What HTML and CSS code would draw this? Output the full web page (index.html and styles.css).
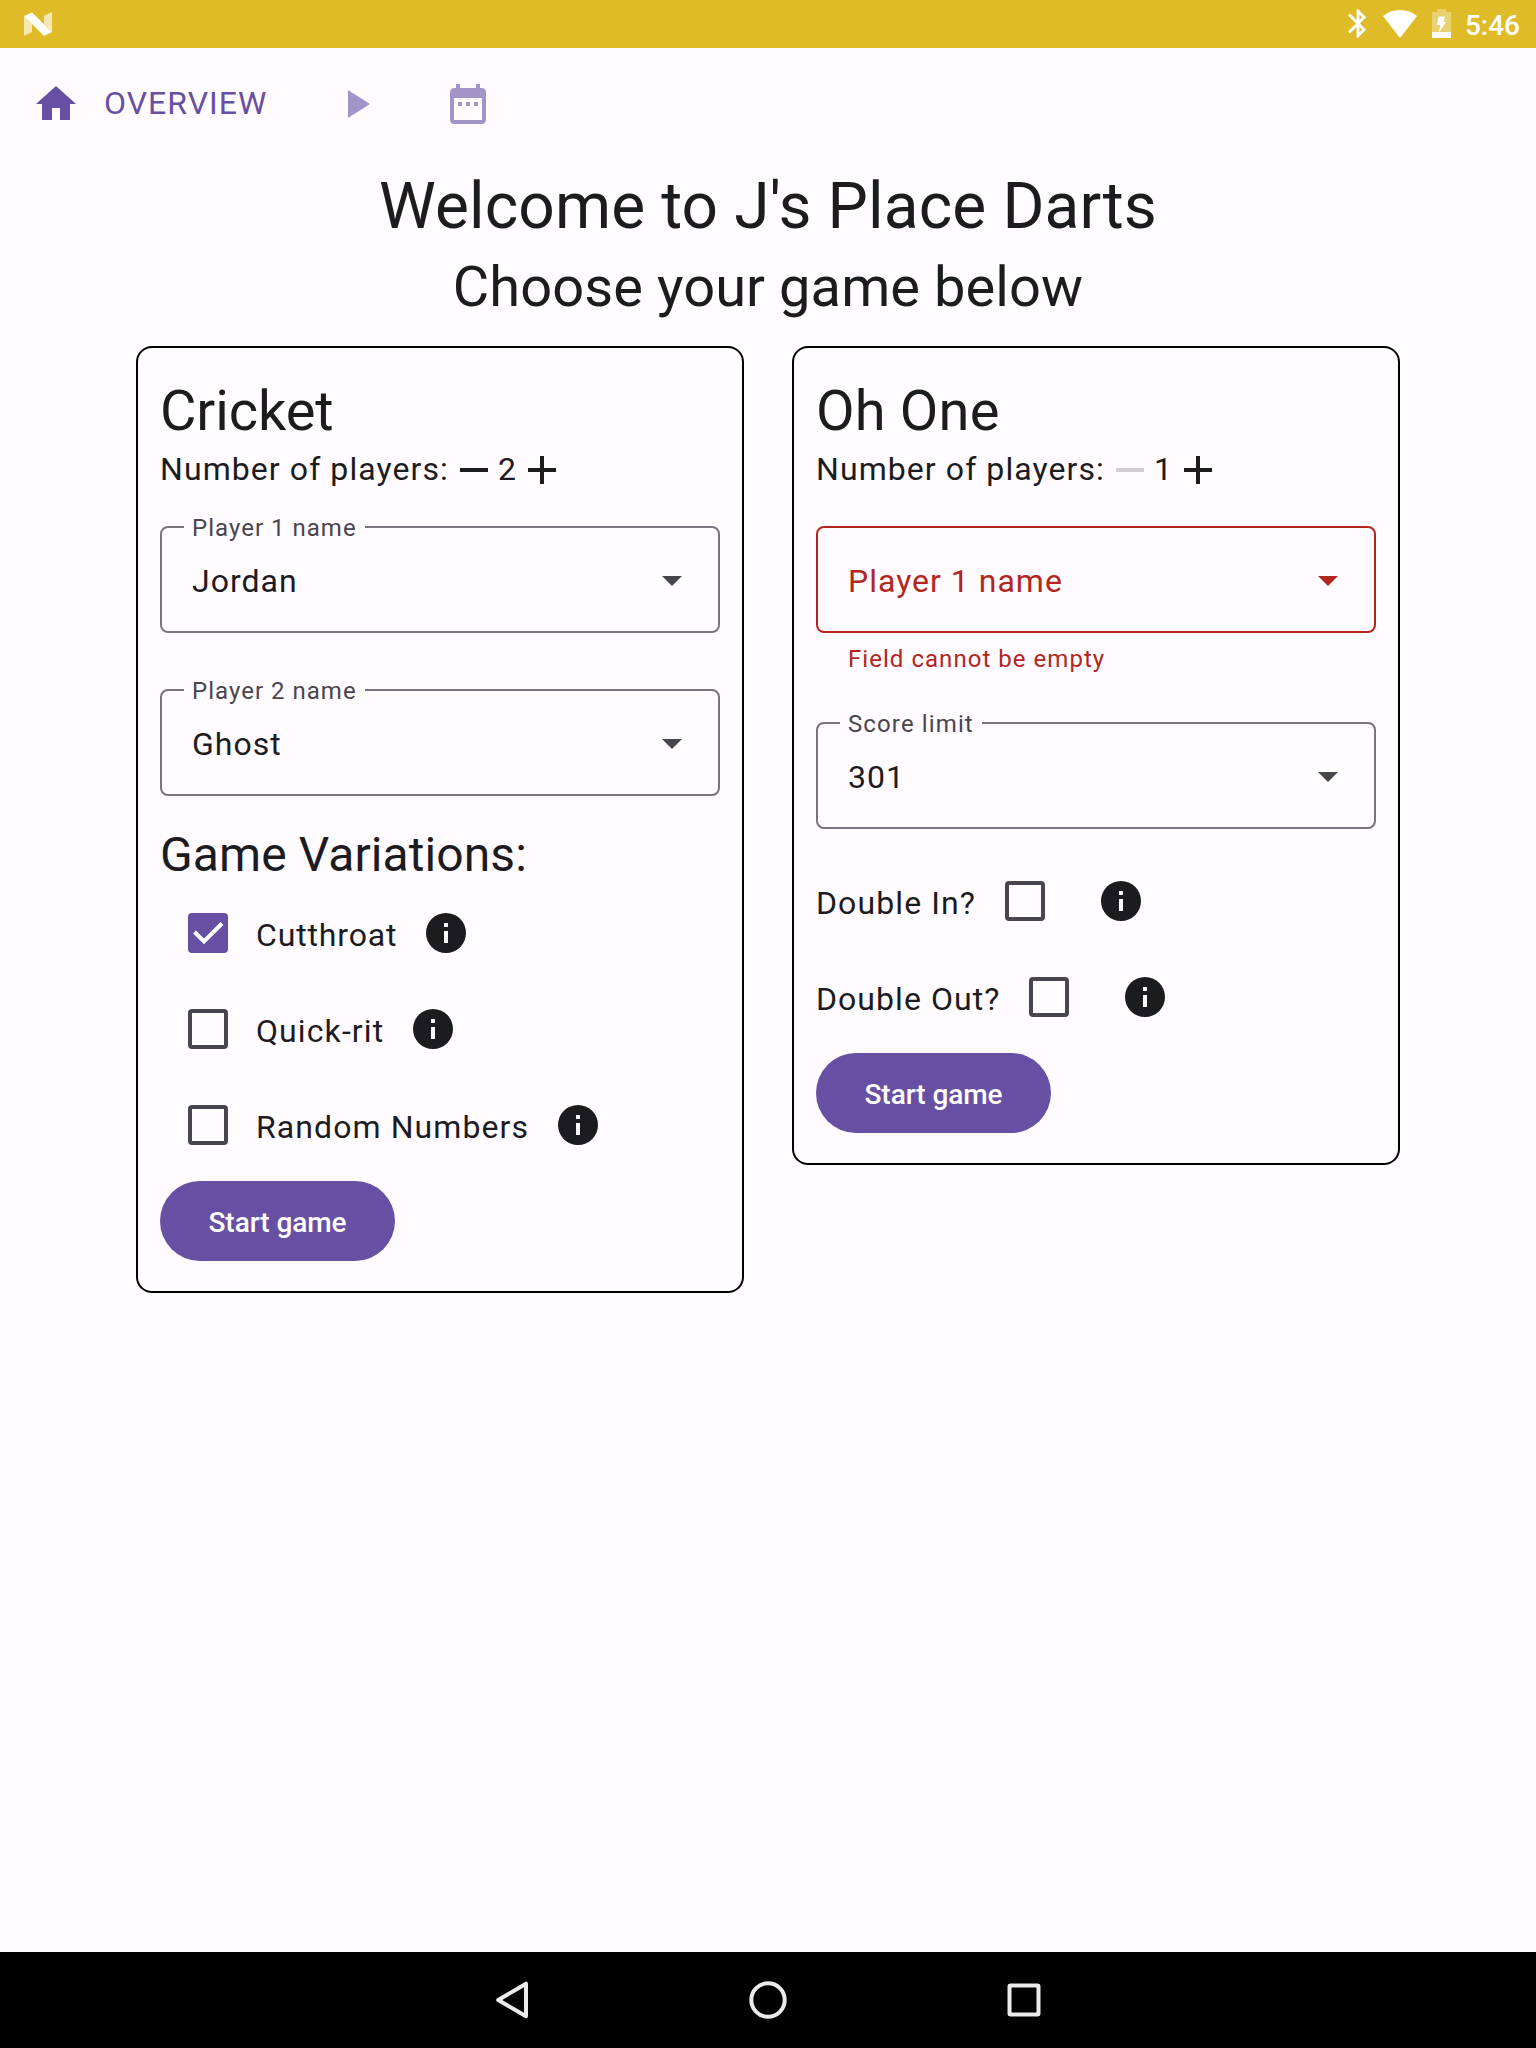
FILE: index.html
```html
<!DOCTYPE html>
<html lang="en">
<head>
<meta charset="utf-8">
<title>J's Place Darts</title>
<link rel="stylesheet" href="styles.css">
</head>
<body>
<svg width="0" height="0" class="defs" aria-hidden="true">
  <symbol id="info" viewBox="0 0 40 40"><path fill-rule="evenodd" d="M20 0a20 20 0 1 0 0 40a20 20 0 0 0 0-40zM18 10h4v4h-4zM18 18h4v12h-4z"/></symbol>
  <symbol id="arrow" viewBox="0 0 24 24"><path d="M7 10l5 5 5-5z"/></symbol>
  <symbol id="minus" viewBox="0 0 24 24"><path d="M19 13H5v-2h14z"/></symbol>
  <symbol id="plus" viewBox="0 0 24 24"><path d="M19 13h-6v6h-2v-6H5v-2h6V5h2v6h6z"/></symbol>
</svg>
<div class="screen">
  <header class="status">
    <svg class="n-logo" viewBox="0 0 28 24" width="28" height="24"><path fill="#fff" fill-opacity=".65" d="M0 4l8 8v8L0 24zM20 4l8-4v20l-8-8z"/><path fill="#fff" d="M0 4L8 0.500L28 20l-8 4z"/></svg>
    <div class="status-icons">
      <svg class="bt" viewBox="5 2 14 20" width="20" height="29"><path fill="#fff" d="M17.710 7.710L12 2h-1v7.590L6.410 5 5 6.410 10.590 12 5 17.590 6.410 19 11 14.410V22h1l5.710-5.710-4.300-4.290 4.300-4.290zM13 5.830l1.880 1.880L13 9.590V5.830zm1.880 10.460L13 18.170v-3.760l1.880 1.880z"/></svg>
      <svg class="wifi" viewBox="0 0 34 28" width="34" height="28"><path fill="#fff" d="M17 28L0 6Q7 0 17 0t17 6z"/></svg>
      <svg class="batt" viewBox="0 0 19 29" width="19" height="29"><path fill="#fff" fill-opacity=".35" d="M0 3h5V0h9v3h5v20H0z"/><path fill="#fff" d="M0 23h19v6H0zM6.500 7.500h6.500l-1.500 5.500h2.500L7 23.500l1.200-7.500H5z"/></svg>
      <span class="clock">5:46</span>
    </div>
  </header>
  <nav class="tabs">
    <a class="tab active"><svg viewBox="0 0 24 24" width="48" height="48"><path d="M10 20v-6h4v6h5v-8h3L12 3 2 12h3v8z"/></svg><span>OVERVIEW</span></a>
    <a class="tab"><svg viewBox="0 0 24 24" width="48" height="48"><path d="M8 5v14l11-7z"/></svg></a>
    <a class="tab"><svg viewBox="0 0 24 24" width="48" height="48"><path d="M9 11H7v2h2v-2zm4 0h-2v2h2v-2zm4 0h-2v2h2v-2zm2-7h-1V2h-2v2H8V2H6v2H5c-1.110 0-1.990.9-1.990 2L3 20c0 1.100.89 2 2 2h14c1.100 0 2-.9 2-2V6c0-1.100-.9-2-2-2zm0 16H5V9h14v11z"/></svg></a>
  </nav>
  <main>
    <h1>Welcome to J's Place Darts</h1>
    <h2>Choose your game below</h2>
    <div class="cards">
      <section class="card">
        <h3>Cricket</h3>
        <div class="count"><span class="count-label">Number of players:</span><svg class="icon"><use href="#minus"/></svg><span class="digit">2</span><svg class="icon"><use href="#plus"/></svg></div>
        <div class="field"><span class="label">Player 1 name</span><span class="value">Jordan</span><svg class="icon drop"><use href="#arrow"/></svg></div>
        <div class="field second"><span class="label">Player 2 name</span><span class="value">Ghost</span><svg class="icon drop"><use href="#arrow"/></svg></div>
        <h4>Game Variations:</h4>
        <div class="option"><span class="box checked"><svg viewBox="0 0 40 40" width="40" height="40"><path d="M6.500 19L16 28.500L34 10.500" fill="none" stroke="#fff" stroke-width="4"/></svg></span><span class="cutthroat">Cutthroat</span><svg class="info"><use href="#info"/></svg></div>
        <div class="option"><span class="box"></span><span class="quick">Quick-rit</span><svg class="info"><use href="#info"/></svg></div>
        <div class="option"><span class="box"></span><span class="random">Random Numbers</span><svg class="info"><use href="#info"/></svg></div>
        <button class="start">Start game</button>
      </section>
      <section class="card">
        <h3 class="wide">Oh One</h3>
        <div class="count"><span class="count-label">Number of players:</span><svg class="icon disabled"><use href="#minus"/></svg><span class="digit">1</span><svg class="icon"><use href="#plus"/></svg></div>
        <div class="field error"><span class="value">Player 1 name</span><svg class="icon drop"><use href="#arrow"/></svg></div>
        <p class="helper">Field cannot be empty</p>
        <div class="field limit"><span class="label">Score limit</span><span class="value">301</span><svg class="icon drop"><use href="#arrow"/></svg></div>
        <div class="option trailing first"><span class="double-in">Double In?</span><span class="box"></span><svg class="info"><use href="#info"/></svg></div>
        <div class="option trailing"><span class="double-out">Double Out?</span><span class="box"></span><svg class="info"><use href="#info"/></svg></div>
        <button class="start">Start game</button>
      </section>
    </div>
  </main>
  <footer class="navbar">
    <svg viewBox="0 0 48 48" width="48" height="48"><path d="M38 7.700v32.600L10.200 24z"/></svg>
    <svg viewBox="0 0 48 48" width="48" height="48"><circle cx="24" cy="24" r="16.700"/></svg>
    <svg viewBox="0 0 48 48" width="48" height="48"><rect x="9.500" y="9.500" width="29" height="29" rx="1"/></svg>
  </footer>
</div>
</body>
</html>
```
FILE: styles.css
```css
* { box-sizing: border-box; }
body { margin: 0; background: #fffbff; color: #1c1b1f; font-family: Roboto, "Liberation Sans", sans-serif; font-size: 32px; letter-spacing: 1px; }
h1, h2, h3, h4, p { margin: 0; font-weight: 400; letter-spacing: 0; }
svg { display: block; flex: none; }
.defs { position: absolute; }
.screen { width: 1536px; height: 2048px; display: flex; flex-direction: column; }

.status { height: 48px; background: #dfbb27; display: flex; justify-content: space-between; padding: 0 16px 0 24px; }
.n-logo { margin-top: 12px; }
.status-icons { display: flex; align-items: flex-start; }
.bt { margin: 9px 15px 0 0; }
.wifi { margin: 10px 15px 0 0; }
.batt { margin: 9px 14px 0 0; }
.clock { color: #fff; font-size: 28px; font-weight: 500; line-height: 34px; margin-top: 9px; letter-spacing: 0; }

.tabs { display: flex; padding: 32px 32px 0; height: 119px; gap: 64px; color: #6750a4; }
.tab { display: flex; gap: 24px; height: 48px; line-height: 46px; opacity: .6; }
.tab.active { opacity: 1; }
.tab svg { fill: currentColor; }
.tab.active span { width: 164px; white-space: nowrap; }

main { flex: 1; }
h1 { font-size: 64px; line-height: 80px; text-align: center; letter-spacing: .12px; }
h2 { font-size: 56px; line-height: 72px; text-align: center; margin-top: 4px; letter-spacing: .07px; }
.cards { display: flex; align-items: flex-start; justify-content: center; gap: 48px; margin-top: 23px; }
.card { width: 608px; border: 2px solid #000; border-radius: 16px; padding: 28px 22px 22px; display: flex; flex-direction: column; }
h3 { font-size: 56px; line-height: 70px; letter-spacing: -.1px; }
h3.wide { letter-spacing: .2px; }
h4 { font-size: 48px; line-height: 62px; margin: 28px 0 -1px; letter-spacing: .08px; }
.icon { width: 48px; height: 48px; fill: currentColor; }
.count { display: flex; height: 48px; line-height: 46px; }
.count-label { width: 290px; letter-spacing: 1.08px; white-space: nowrap; }
.digit { width: 20px; }
.disabled { opacity: .2; }

.field { position: relative; display: flex; align-items: center; justify-content: space-between; height: 107px; margin-top: 32px; border: 2px solid #79747e; border-radius: 8px; padding: 0 22px 0 30px; }
.field.second { margin-top: 56px; }
.field.limit { margin-top: 48px; }
.field.error { border-color: #b3261e; color: #b3261e; }
.label { position: absolute; left: 22px; top: -16px; padding: 0 8px; background: #fffbff; color: #49454f; font-size: 24px; line-height: 32px; letter-spacing: 1.02px; }
.limit .label { letter-spacing: 1.12px; }
.value { line-height: 48px; padding-top: 2px; }
.drop { color: #49454f; }
.error .drop { color: #b3261e; }
.helper { color: #b3261e; font-size: 24px; line-height: 32px; letter-spacing: 1.04px; padding-left: 32px; margin: 10px 0 -1px; }

.option { display: flex; align-items: center; height: 96px; gap: 28px; padding-left: 28px; white-space: nowrap; }
.option span:not(.box) { padding-top: 4px; }
.cutthroat { width: 142px; letter-spacing: .85px; }
.quick { width: 129px; letter-spacing: 1.1px; }
.random { width: 274px; letter-spacing: 1.08px; }
.double-in { width: 161px; letter-spacing: 1.1px; }
.double-out { width: 185px; letter-spacing: 1.05px; }
.option.trailing { padding-left: 0; }
.option.first { margin-top: 24px; }
.trailing .info { margin-left: 28px; }
.box { width: 40px; height: 40px; border: 4px solid #49454f; border-radius: 4px; flex: none; }
.box.checked { border: 0; background: #6750a4; }
.info { width: 40px; height: 40px; fill: #1c1b1f; }
.start { align-self: flex-start; margin: 8px 0; width: 235px; height: 80px; padding: 4px 0 0; border: 0; border-radius: 40px; background: #6750a4; color: #fff; font: 500 28px/40px Roboto, "Liberation Sans", sans-serif; letter-spacing: -.05px; }

.navbar { height: 96px; background: #000; display: flex; justify-content: center; align-items: center; gap: 208px; }
.navbar svg { fill: none; stroke: #ebebeb; stroke-width: 4; stroke-linejoin: round; }
```
